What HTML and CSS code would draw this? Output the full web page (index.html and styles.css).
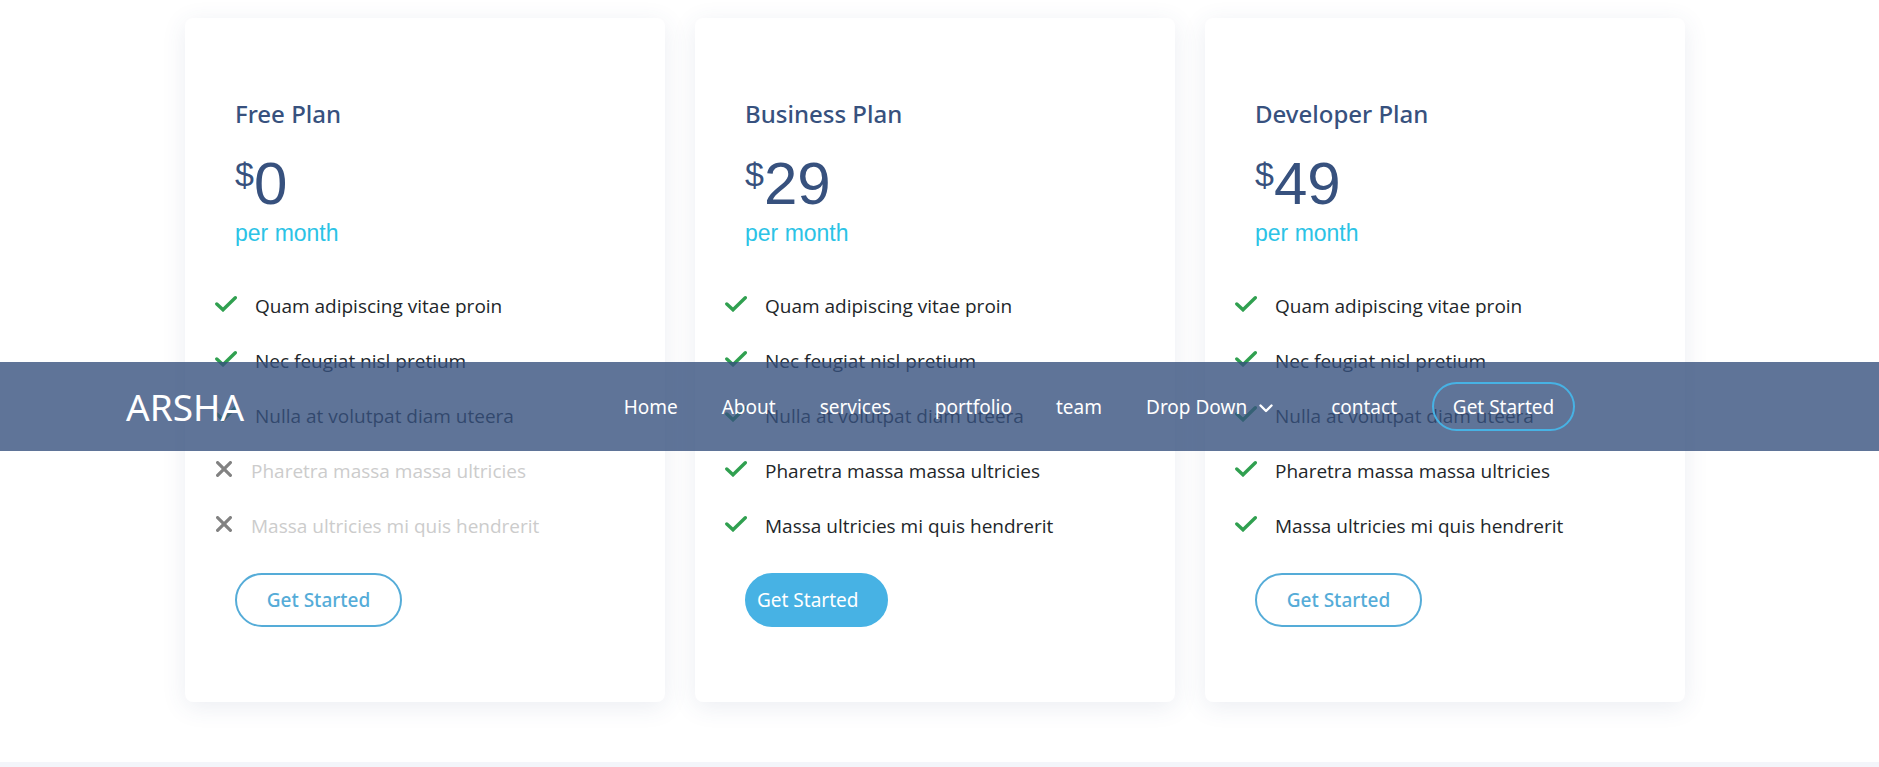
FILE: index.html
```
<!DOCTYPE html>
<html lang="en">
<head>
<meta charset="utf-8">
<title>Arsha</title>
<link rel="stylesheet" href="styles.css">
</head>
<body>
<svg class="sprite" aria-hidden="true">
  <symbol id="check" viewBox="0 0 22 16"><path d="M1.800 8L8 13.800L20.300 1.800" fill="none" stroke="currentColor" stroke-width="3.400" stroke-linecap="round" stroke-linejoin="miter"/></symbol>
  <symbol id="cross" viewBox="0 0 16 16"><path d="M1.600 1.600L14.400 14.400M14.400 1.600L1.600 14.400" fill="none" stroke="currentColor" stroke-width="3.200" stroke-linecap="round"/></symbol>
</svg>
<header class="header">
  <a class="brand" href="#">ARSHA</a>
  <nav class="nav">
    <a href="#">Home</a>
    <a href="#">About</a>
    <a href="#">services</a>
    <a href="#">portfolio</a>
    <a href="#">team</a>
    <a class="dropdown" href="#">Drop Down <svg class="chevron" viewBox="0 0 14 9"><path d="M1.500 1.500L7 7L12.500 1.500" fill="none" stroke="currentColor" stroke-width="2.400" stroke-linecap="round" stroke-linejoin="round"/></svg></a>
    <a href="#">contact</a>
    <a class="nav-cta" href="#">Get Started</a>
  </nav>
</header>
<main class="pricing">
  <section class="card">
    <h3 class="plan">Free Plan</h3>
    <p class="price"><sup class="currency">$</sup>0</p>
    <p class="period">per month</p>
    <ul class="features">
      <li><svg class="check"><use href="#check"/></svg>Quam adipiscing vitae proin</li>
      <li><svg class="check"><use href="#check"/></svg>Nec feugiat nisl pretium</li>
      <li><svg class="check"><use href="#check"/></svg>Nulla at volutpat diam uteera</li>
      <li class="na"><svg class="cross"><use href="#cross"/></svg>Pharetra massa massa ultricies</li>
      <li class="na"><svg class="cross"><use href="#cross"/></svg>Massa ultricies mi quis hendrerit</li>
    </ul>
    <a class="buy" href="#">Get Started</a>
  </section>
  <section class="card">
    <h3 class="plan">Business Plan</h3>
    <p class="price"><sup class="currency">$</sup>29</p>
    <p class="period">per month</p>
    <ul class="features">
      <li><svg class="check"><use href="#check"/></svg>Quam adipiscing vitae proin</li>
      <li><svg class="check"><use href="#check"/></svg>Nec feugiat nisl pretium</li>
      <li><svg class="check"><use href="#check"/></svg>Nulla at volutpat diam uteera</li>
      <li><svg class="check"><use href="#check"/></svg>Pharetra massa massa ultricies</li>
      <li><svg class="check"><use href="#check"/></svg>Massa ultricies mi quis hendrerit</li>
    </ul>
    <a class="buy buy-filled" href="#">Get Started</a>
  </section>
  <section class="card">
    <h3 class="plan">Developer Plan</h3>
    <p class="price"><sup class="currency">$</sup>49</p>
    <p class="period">per month</p>
    <ul class="features">
      <li><svg class="check"><use href="#check"/></svg>Quam adipiscing vitae proin</li>
      <li><svg class="check"><use href="#check"/></svg>Nec feugiat nisl pretium</li>
      <li><svg class="check"><use href="#check"/></svg>Nulla at volutpat diam uteera</li>
      <li><svg class="check"><use href="#check"/></svg>Pharetra massa massa ultricies</li>
      <li><svg class="check"><use href="#check"/></svg>Massa ultricies mi quis hendrerit</li>
    </ul>
    <a class="buy" href="#">Get Started</a>
  </section>
</main>
<div class="next-section"></div>
</body>
</html>
```
FILE: styles.css
```
* { box-sizing: border-box; }
body {
  margin: 0;
  background: #fff;
  color: #222629;
  font-family: "Noto Sans", "Open Sans", sans-serif;
  font-size: 19px;
  overflow: hidden;
}
a { color: inherit; text-decoration: none; }
.sprite { display: none; }

/* navigation bar floating over the page */
.header {
  position: absolute;
  top: 362px;
  left: 0;
  right: 0;
  z-index: 10;
  display: flex;
  align-items: center;
  justify-content: space-between;
  height: 89px;
  padding: 0 304px 0 126px;
  background: rgba(55, 81, 126, 0.8);
  color: #fff;
}
.brand { font-size: 37px; line-height: 48px; }
.nav { display: flex; align-items: center; gap: 44px; white-space: nowrap; }
.dropdown { display: flex; align-items: center; gap: 12px; margin-right: 14px; }
.chevron { width: 14px; height: 9px; margin-top: 4px; }
.nav-cta {
  width: 143px;
  margin-left: -9px;
  padding-top: 1px;
  border: 2px solid #47b2e4;
  border-radius: 25px;
  line-height: 44px;
  text-align: center;
}

.pricing {
  display: grid;
  grid-template-columns: repeat(3, 1fr);
  gap: 30px;
  padding: 18px 194px 60px 185px;
}
.card {
  padding: 78px 50px 75px;
  border-radius: 8px;
  box-shadow: 0 5px 25px rgba(55, 81, 126, 0.1);
}
.plan {
  margin: 0;
  color: #37517e;
  font-size: 24px;
  font-weight: 500;
  line-height: 36px;
}
.price, .period { margin: 0; font-family: "Liberation Sans", Arial, sans-serif; }
.price { display: flex; align-items: flex-start; margin-top: 16px; color: #37517e; font-size: 60px; line-height: 72px; }
.currency { font-size: 34px; line-height: 52px; }
.period { color: #2bc3e6; font-size: 23px; line-height: 26px; }
.features {
  list-style: none;
  margin: 33px 0 0 -20px;
  padding: 0;
  font-family: "Open Sans", "Noto Sans", sans-serif;
}
.features li { display: flex; align-items: center; gap: 18px; padding: 14px 0; line-height: 27px; }
.check, .cross { flex: none; height: 16px; margin-bottom: 6px; }
.check { width: 22px; color: #30a050; }
.cross { width: 16px; margin: 0 1px 6px; color: #828282; }
.na { color: #ccc; }
.buy {
  display: block;
  width: 167px;
  margin-top: 19px;
  padding-top: 1px;
  border: 2px solid #55acd8;
  border-radius: 27px;
  color: #55acd8;
  font-weight: 500;
  line-height: 49px;
  text-align: center;
}
.buy-filled {
  width: 143px;
  padding-left: 10px;
  background: #47b2e4;
  border-color: #47b2e4;
  color: #fff;
  font-weight: 400;
  text-align: left;
}
.next-section { height: 40px; background: #f3f5fa; }
```
